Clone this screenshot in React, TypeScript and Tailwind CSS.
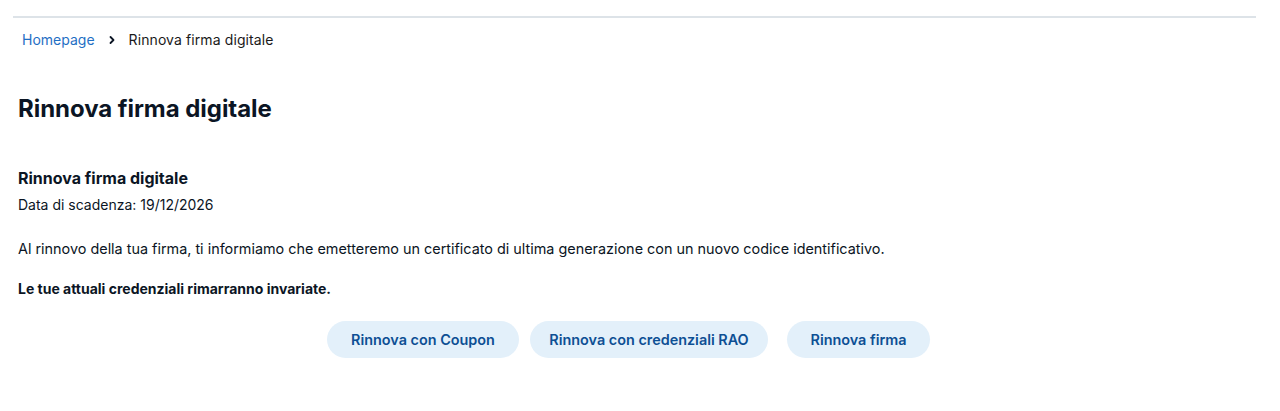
export default function App() {
  return (
    <div className="min-h-[411px] bg-white text-[#0b1524]" style={{ fontFamily: "Inter, 'Noto Sans', sans-serif" }}>
      <div className="pl-[13px] pr-[24px] pt-[16px]">
        <div className="border-t-2 border-[#dde3e8]" />
      </div>

      {/* Breadcrumb */}
      <nav className="flex items-center px-[22px] pt-[12px] text-[14px] leading-[20px]">
        <a href="#" className="text-[#1f6fc4]">Homepage</a>
        <svg className="mx-[12px] h-[10px] w-[10px]" viewBox="0 0 10 10" fill="none">
          <path d="M3.5 2 L6.5 5 L3.5 8" stroke="#0b1524" strokeWidth="1.8" strokeLinecap="round" strokeLinejoin="round" />
        </svg>
        <span className="text-[#1a1a1a] tracking-[0.1px]">Rinnova firma digitale</span>
      </nav>

      <div className="pl-[18px] pr-[24px]">
        <h1 className="mt-[43px] text-[24px] font-bold leading-[32px] tracking-[-0.05px]">Rinnova firma digitale</h1>

        <h2 className="mt-[42px] text-[16px] font-bold leading-[22px]">Rinnova firma digitale</h2>
        <p className="mt-[6px] text-[14px] leading-[20px]">Data di scadenza: 19/12/2026</p>

        <p className="mt-[24px] text-[14.4px] leading-[20px]">
          Al rinnovo della tua firma, ti informiamo che emetteremo un certificato di ultima generazione con un nuovo codice identificativo.
        </p>
        <p className="mt-[20px] text-[14px] font-bold leading-[20px]">Le tue attuali credenziali rimarranno invariate.</p>

        <div className="mt-[22px] flex justify-center gap-[11px] pr-[17px]">
          <button className="h-[37px] w-[192px] rounded-full bg-[#e3f0fa] text-[14.4px] font-semibold text-[#0d4f94]">
            Rinnova con Coupon
          </button>
          <button className="h-[37px] w-[238px] rounded-full bg-[#e3f0fa] text-[14.4px] font-semibold text-[#0d4f94]">
            Rinnova con credenziali RAO
          </button>
          <button className="ml-[8px] h-[37px] w-[143px] rounded-full bg-[#e3f0fa] text-[14.4px] font-semibold text-[#0d4f94]">
            Rinnova firma
          </button>
        </div>
      </div>
    </div>
  )
}
